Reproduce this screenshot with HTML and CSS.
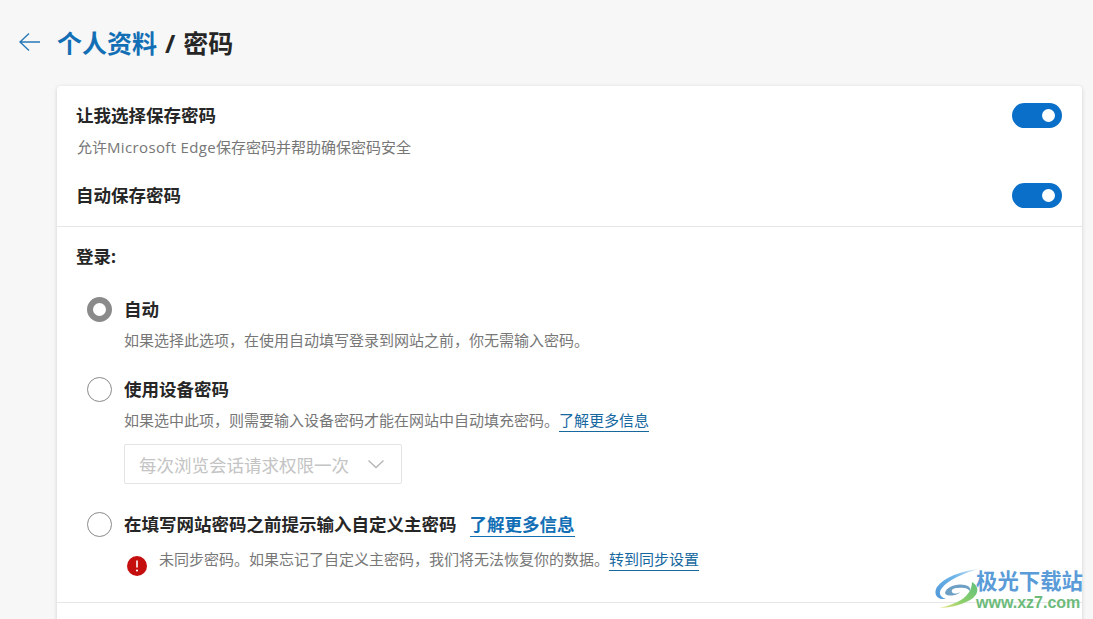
FILE: index.html
```html
<!DOCTYPE html>
<html lang="zh-CN">
<head>
  <meta charset="UTF-8" />
  <title>个人资料 / 密码</title>
  <link rel="stylesheet" href="styles.css">
</head>
<body>
<header class="page-head">
  <svg class="back" width="24" height="20" viewBox="0 0 24 20"><path d="M11 1.500 2 10l9 8.500M2 10h20" fill="none" stroke="#2a7ab8" stroke-width="1.400"/></svg>
  <h1><a href="#">个人资料</a> / 密码</h1>
</header>

<main class="card">
  <section class="top">
    <div class="row">
      <div class="row-title">让我选择保存密码</div>
      <span class="toggle"></span>
    </div>
    <p class="desc first-desc">允许<span class="latin">Microsoft Edge</span>保存密码并帮助确保密码安全</p>
    <div class="row second-row">
      <div class="row-title">自动保存密码</div>
      <span class="toggle"></span>
    </div>
  </section>

  <section class="login">
    <div class="row-title">登录:</div>

    <div class="option first-option">
      <span class="radio checked"></span>
      <div class="option-title">自动</div>
    </div>
    <p class="desc option-desc">如果选择此选项，在使用自动填写登录到网站之前，你无需输入密码。</p>

    <div class="option second-option">
      <span class="radio"></span>
      <div class="option-title">使用设备密码</div>
    </div>
    <p class="desc option-desc">如果选中此项，则需要输入设备密码才能在网站中自动填充密码。<a class="link" href="#">了解更多信息</a></p>
    <div class="select">
      <span>每次浏览会话请求权限一次</span>
      <svg width="18" height="10" viewBox="0 0 18 10"><path d="M1.500 1.500 9 8.500l7.500-7" fill="none" stroke="#b5b5b5" stroke-width="1.300"/></svg>
    </div>

    <div class="option third-option">
      <span class="radio"></span>
      <div class="option-title">在填写网站密码之前提示输入自定义主密码</div>
      <a class="link big-link" href="#">了解更多信息</a>
    </div>
    <div class="warning">
      <svg width="20" height="20" viewBox="0 0 20 20"><circle cx="10" cy="10" r="10" fill="#c50f0f"/><path d="M10 4.500v7" stroke="#fff" stroke-width="1.600"/><circle cx="10" cy="14.500" r="1.100" fill="#fff"/></svg>
      <p class="desc">未同步密码。如果忘记了自定义主密码，我们将无法恢复你的数据。<a class="link" href="#">转到同步设置</a></p>
    </div>
  </section>

  <section class="bottom"></section>
</main>

<!-- 水印 -->
<div class="watermark">
  <svg width="45" height="41" viewBox="0 0 45 41">
    <defs>
      <linearGradient id="wm-blue" x1="0" y1="1" x2="1" y2="0">
        <stop offset="0" stop-color="#4f97d8"/>
        <stop offset="0.6" stop-color="#6db4e8"/>
        <stop offset="1" stop-color="#d5e8f5"/>
      </linearGradient>
      <linearGradient id="wm-green" x1="1" y1="0" x2="0" y2="1">
        <stop offset="0" stop-color="#5fbf7c"/>
        <stop offset="0.6" stop-color="#8fd06a"/>
        <stop offset="1" stop-color="#efe68a"/>
      </linearGradient>
    </defs>
    <path d="M44 1C28 3 10 9 3 19c-4 7 0 13 9 12-6-2-8-6-4-11C14 12 30 5 44 1z" fill="url(#wm-blue)"/>
    <path d="M11 25c1-6 11-10 20-8 4 1 6 3 5 6-2-3-7-4-12-3-5 0-7 2-6 4 1 2 5 2 8 0-2 4-14 5-15 1z" fill="#6e9fc4"/>
    <path d="M38 14c7 4 7 11 1 16C31 36 17 40 5 40c9-2 21-6 27-12 4-4 6-9 6-14z" fill="url(#wm-green)"/>
  </svg>
  <div class="watermark-text">
    <div class="wm-name">极光下载站</div>
    <div class="wm-url">www.xz7.com</div>
  </div>
</div>
</body>
</html>
```

FILE: styles.css
```css
body {
  margin: 0;
  height: 619px;
  overflow: hidden;
  background: #f7f7f7;
  color: #262626;
  font-family: "Open Sans", "Noto Sans CJK SC", sans-serif;
  position: relative;
}

p { margin: 0; }

/* 标题 */
.page-head {
  display: flex;
  align-items: center;
  height: 86px;
  padding: 0 0 0 18px;
  box-sizing: border-box;
}
.back { margin: 0 15px 2px 0; }
h1 {
  margin: 0;
  font-size: 25px;
  font-weight: 700;
  line-height: 34px;
  word-spacing: 1.5px;
}
h1 a { color: #136fb5; text-decoration: none; }

/* 卡片 */
.card {
  margin-left: 57px;
  width: 1025px;
  background: #fff;
  border-radius: 4px 4px 0 0;
  box-shadow: 0 1px 4px rgba(0,0,0,0.16);
}
.top {
  padding: 17px 20px 18px;
  border-bottom: 1px solid #e6e6e6;
}
.row {
  display: flex;
  justify-content: space-between;
  align-items: center;
  height: 25px;
}
.row-title {
  font-size: 17.500px;
  font-weight: 700;
  line-height: 25px;
  margin-left: -1px;
}
.desc {
  font-size: 15px;
  line-height: 20px;
  color: #777;
}
.latin { letter-spacing: 0.35px; }
.first-desc { margin-top: 9px; }
.second-row { margin-top: 26px; }

.toggle {
  width: 50px;
  height: 25px;
  border-radius: 13px;
  background: #0a6fc9;
  position: relative;
}
.toggle::after {
  content: "";
  position: absolute;
  right: 7px;
  top: 6px;
  width: 13px;
  height: 13px;
  border-radius: 50%;
  background: #fff;
}

/* 登录选项 */
.login {
  padding: 17px 20px 31px;
  height: 376px;
  box-sizing: border-box;
  border-bottom: 1px solid #e6e6e6;
}
.option {
  display: flex;
  align-items: center;
  height: 26px;
  padding-left: 10px;
}
.first-option { margin-top: 27px; }
.second-option { margin-top: 26px; }
.third-option { margin-top: 27px; }
.radio {
  width: 23px;
  height: 23px;
  border: 1px solid #8a8a8a;
  border-radius: 50%;
  margin-right: 12px;
  flex: none;
}
.radio.checked {
  width: 13px;
  height: 13px;
  border: 6px solid #8a8a8a;
}
.option-title {
  font-size: 17.500px;
  font-weight: 700;
  line-height: 26px;
}
.option-desc {
  margin: 8px 0 0 47px;
}
.link {
  color: #16689f;
  text-decoration: none;
  border-bottom: 1px solid #16689f;
  padding-bottom: 1px;
}
.big-link {
  margin-left: 13px;
  color: #136fb5;
  font-size: 17.500px;
  font-weight: 700;
  line-height: 24px;
  border-bottom-color: #136fb5;
  padding-bottom: 0;
}
.select {
  display: flex;
  align-items: center;
  justify-content: space-between;
  box-sizing: border-box;
  width: 278px;
  height: 40px;
  margin: 14px 0 0 47px;
  padding: 0 16px 0 14px;
  border: 1px solid #e4e4e4;
  border-radius: 2px;
  color: #c4c4c4;
  font-size: 17.500px;
}
.warning {
  display: flex;
  align-items: flex-start;
  margin: 12px 0 0 50px;
}
.warning svg { margin: 7px 12px 0 0; flex: none; }

.bottom { height: 20px; }

/* 水印 */
.watermark {
  position: absolute;
  left: 934px;
  top: 568px;
  width: 159px;
  display: flex;
  align-items: flex-start;
}
.watermark-text {
  margin-left: -3px;
}
.wm-name {
  font-size: 21.400px;
  line-height: 26px;
  font-weight: 700;
  color: #5a9bd8;
  white-space: nowrap;
}
.wm-url {
  font-family: "Liberation Sans", sans-serif;
  font-size: 16px;
  font-weight: 700;
  line-height: 17px;
  color: #6dbb7a;
  white-space: nowrap;
}
```
